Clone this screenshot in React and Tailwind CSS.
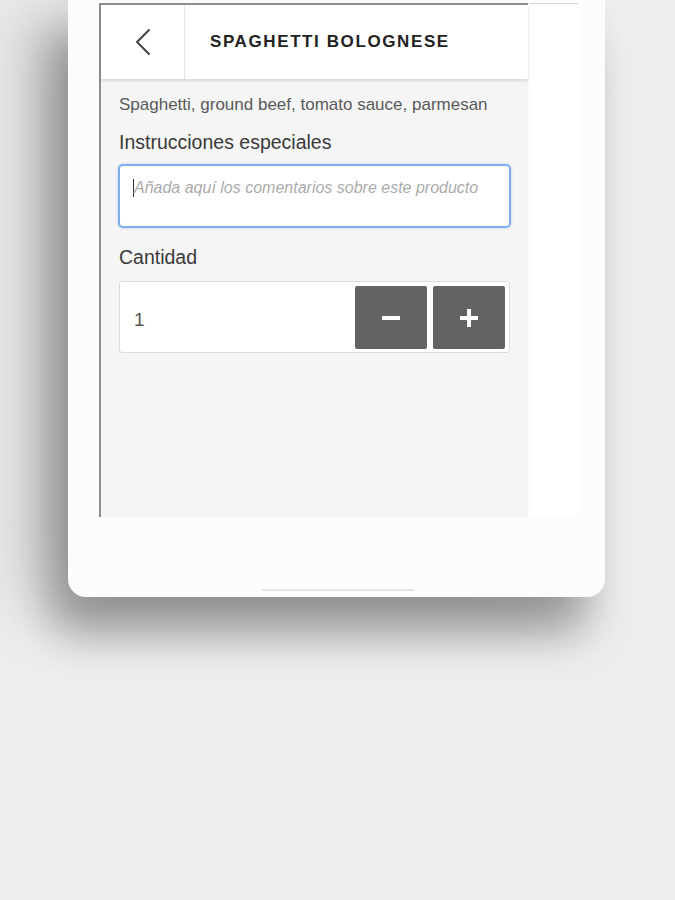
const font = { fontFamily: '"Liberation Sans", Arial, sans-serif' }

const QtyButton = ({ children }) => (
  <button className="w-[72px] h-[63px] rounded-[2px] bg-[#636363] flex items-center justify-center">
    {children}
  </button>
)

const App = () => {
  return (
    <div className="w-[675px] h-[900px] bg-[#eeedeb] overflow-hidden" style={font}>
      {/* tablet */}
      <div className="ml-[68px] w-[537px] h-[597px] bg-[#fcfcfc] rounded-b-[18px] shadow-[-22px_30px_40px_rgba(0,0,0,0.2),-50px_10px_70px_rgba(0,0,0,0.14),-10px_45px_45px_-5px_rgba(0,0,0,0.16)] pt-[3px] pl-[31px] flex flex-col">
        <div className="flex h-[514px] w-[479px]">
          {/* app panel */}
          <div className="w-[429px] border-l-2 border-t-2 border-[#8e8e8e] bg-[#f5f5f5] flex flex-col">
            <div className="h-[74px] bg-white flex shadow-[0_2px_3px_rgba(0,0,0,0.12)]">
              <div className="w-[84px] border-r border-[#e4e4e4] flex items-center justify-center">
                <svg width="16" height="28" viewBox="0 0 16 28" fill="none">
                  <path d="M14 2 L2 14 L14 26" stroke="#444" strokeWidth="2" strokeLinecap="round" strokeLinejoin="round" />
                </svg>
              </div>
              <div className="flex items-center pl-[25px] text-[17px] font-bold tracking-[1.6px] text-[#222]">
                SPAGHETTI BOLOGNESE
              </div>
            </div>

            <div className="px-[18px] pt-[16px]">
              <p className="text-[17px] leading-[20px] text-[#5a5a5a]">
                Spaghetti, ground beef, tomato sauce, parmesan
              </p>
              <p className="mt-[15px] text-[19.5px] leading-[24px] text-[#3a3a3a]">
                Instrucciones especiales
              </p>
              <div className="mt-[10px] -ml-px w-[393px] h-[64px] rounded-[5px] border-2 border-[#80adee] bg-white shadow-[0_0_3px_rgba(100,150,230,0.4)] pl-[13px] pt-[12px] flex items-start">
                <span className="w-px h-[18px] bg-[#333] mt-px" />
                <span className="text-[16px] leading-[20px] italic text-[#ababab]">
                  Añada aquí los comentarios sobre este producto
                </span>
              </div>
              <p className="mt-[17px] text-[19.5px] leading-[24px] text-[#3a3a3a]">
                Cantidad
              </p>
              <div className="mt-[12px] w-[391px] h-[72px] rounded-[3px] border border-[#dcdcdc] bg-white flex items-start pt-[4px] pr-[4px]">
                <span className="flex-1 pl-[14px] pt-[22px] text-[19px] leading-[24px] text-[#555]">1</span>
                <div className="flex gap-[6px]">
                  <QtyButton>
                    <span className="block w-[18px] h-[4px] bg-white" />
                  </QtyButton>
                  <QtyButton>
                    <svg width="18" height="18" viewBox="0 0 18 18">
                      <rect x="7" y="0" width="4" height="18" fill="#fff" />
                      <rect x="0" y="7" width="18" height="4" fill="#fff" />
                    </svg>
                  </QtyButton>
                </div>
              </div>
            </div>
          </div>
          {/* side area */}
          <div className="flex-1 ml-[2px] bg-white border-t border-[#d2d2d2]" />
        </div>
        <div className="mt-auto mb-[6px] ml-[163px] w-[152px] h-[2px] bg-[#e4e4e4]" />
      </div>
    </div>
  )
}

export default App
